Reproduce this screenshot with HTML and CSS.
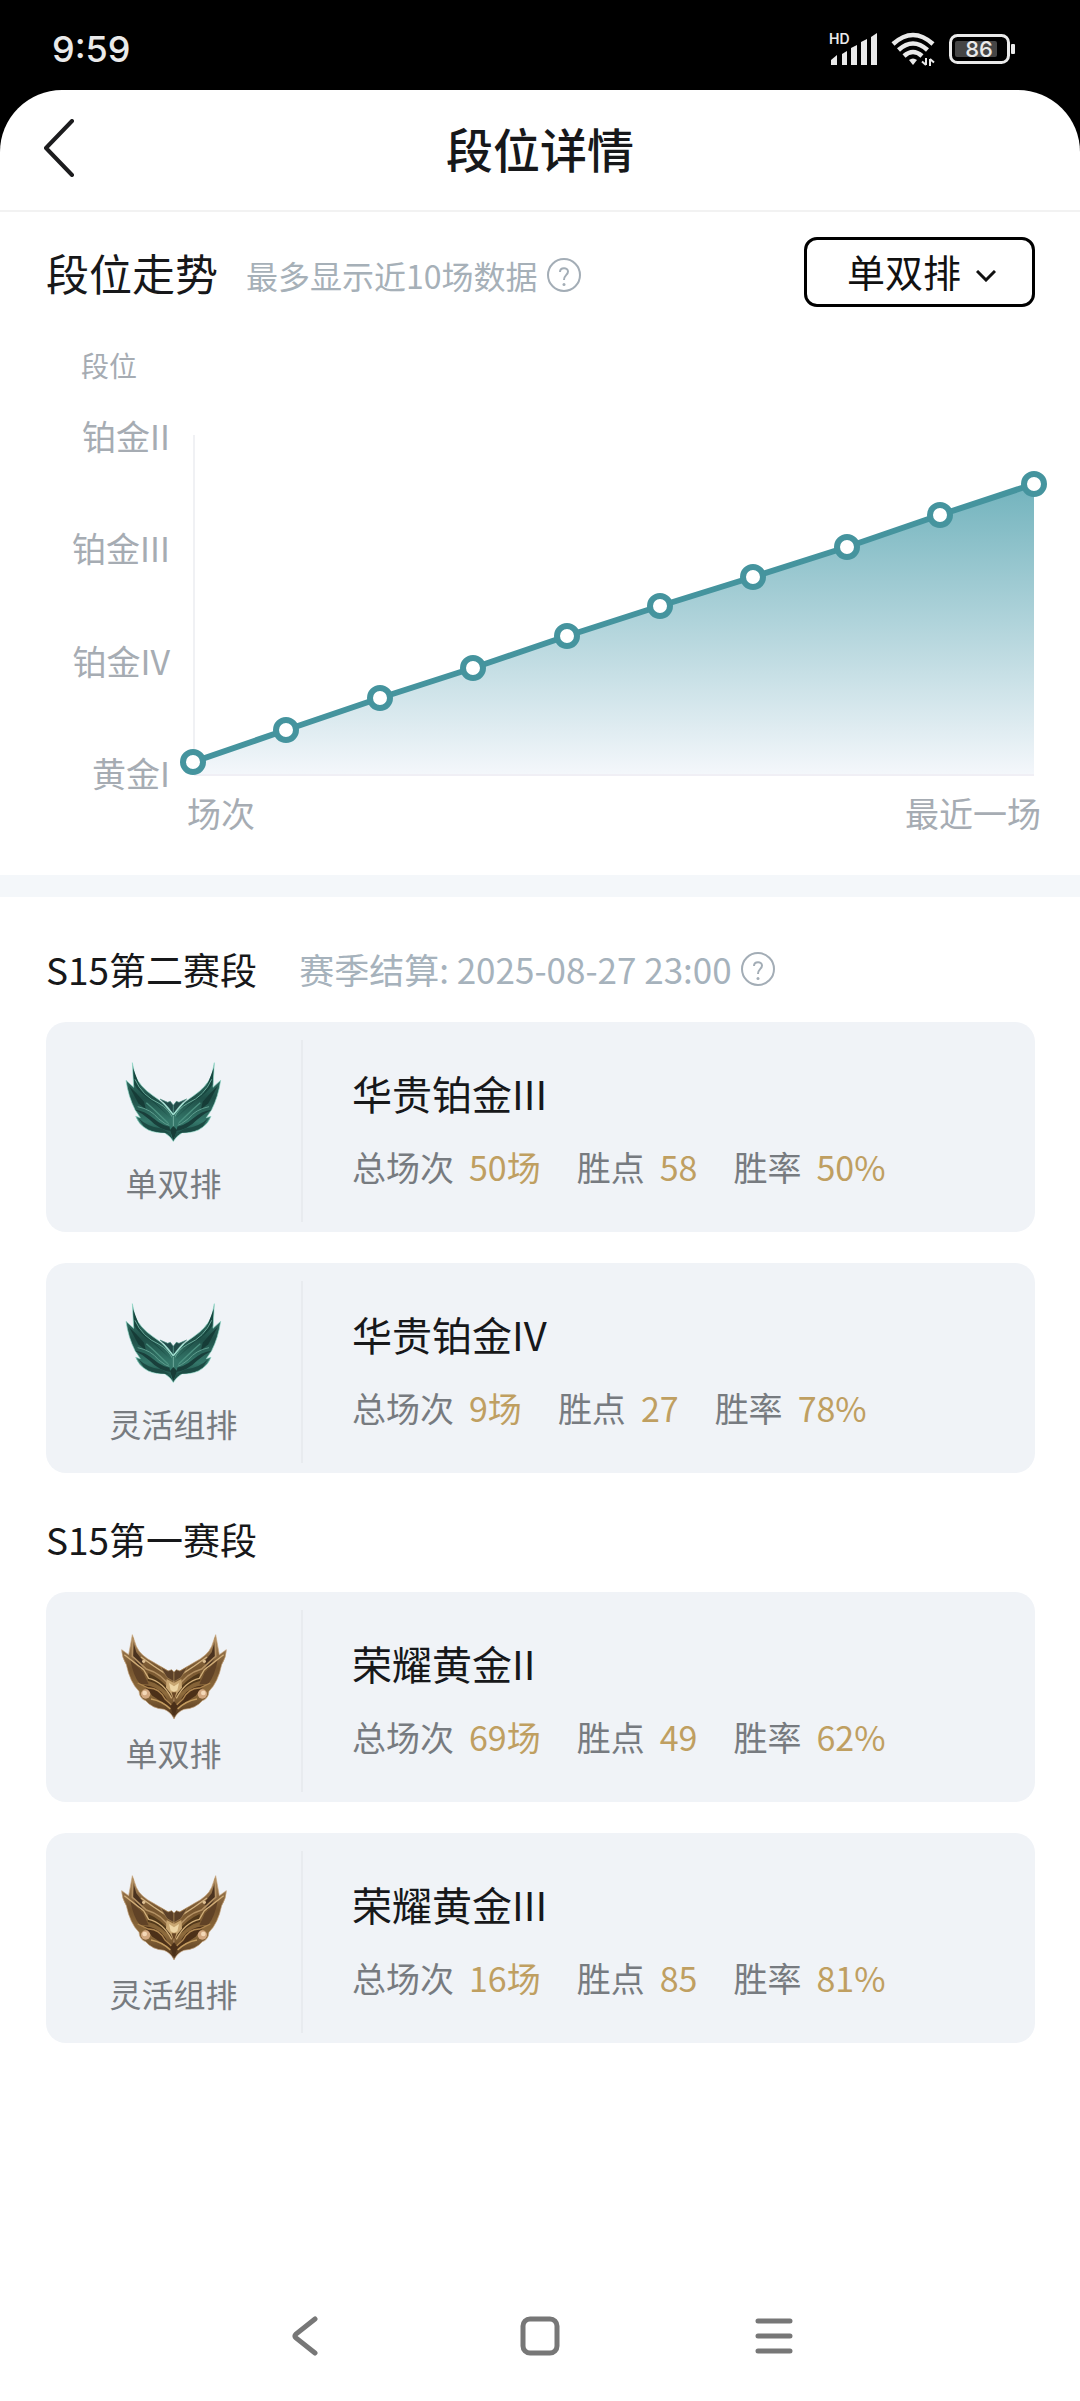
FILE: index.html
```html
<!DOCTYPE html>
<html lang="zh-CN">
<head>
<meta charset="utf-8">
<meta name="viewport" content="width=device-width, initial-scale=1">
<title>段位详情</title>
<link rel="stylesheet" href="styles.css">
</head>
<body>
<svg class="defs" aria-hidden="true">
  <defs>
    <linearGradient id="area" x1="0" y1="0" x2="0" y2="1">
      <stop offset="0" stop-color="#72b3bd"/>
      <stop offset="1" stop-color="#f4f7fb"/>
    </linearGradient>
    <linearGradient id="teal" x1="0" y1="0" x2="0" y2="1">
      <stop offset="0" stop-color="#3f8577"/>
      <stop offset=".45" stop-color="#1f5048"/>
      <stop offset=".75" stop-color="#34776a"/>
      <stop offset="1" stop-color="#163f3a"/>
    </linearGradient>
    <linearGradient id="gold" x1="0" y1="0" x2="0" y2="1">
      <stop offset="0" stop-color="#b08d62"/>
      <stop offset=".4" stop-color="#76552f"/>
      <stop offset=".7" stop-color="#8e6b3c"/>
      <stop offset="1" stop-color="#4a2f19"/>
    </linearGradient>
    <symbol id="platinum" viewBox="0 -15 390 330">
      <g id="platinum-wing">
        <path d="M70 38 L78 76 Q94 112 132 137 Q176 166 193 194 L193 274 Q184 258 166 248 Q128 250 105 232 Q88 220 80 199 L94 203 L78 179 Q58 140 51 91 L74 112Z" fill="url(#teal)" stroke="#8fd6c5" stroke-width="2"/>
        <path d="M72 54 L76 104 Q94 132 126 150 L186 205 Q150 170 96 118Z" fill="#17463f"/>
        <path d="M60 108 Q82 128 105 155 L111 179 L88 160Z" fill="#163c37"/>
        <path d="M78 179 Q108 182 136 207 Q160 228 190 231 L190 244 Q150 239 122 209 Q104 192 78 179Z" fill="#193f3b"/>
        <path d="M78 88 Q100 138 150 160 Q178 176 190 202" fill="none" stroke="#69a999" stroke-width="3"/>
        <path d="M86 170 Q126 178 148 206 Q168 224 190 230" fill="none" stroke="#5f9e8f" stroke-width="3"/>
        <path d="M88 204 Q116 232 160 236 L180 249 Q130 250 104 228Z" fill="#1d4c45"/>
        <path d="M112 158 L134 178 L184 226" fill="none" stroke="#4c9180" stroke-width="4"/>
        <path d="M153 147 L176 157 L184 154 L193 166 L193 194 Q180 170 153 147Z" fill="#214b49" stroke="#4f8f83" stroke-width="2"/>
      </g>
      <use href="#platinum-wing" transform="translate(386 0) scale(-1 1)"/>
      <path d="M162 158 L193 194 L224 158" fill="none" stroke="#a5e3d4" stroke-width="4"/>
      <path d="M193 194 L210 211 L197 264 L193 274 L187 260 L178 211Z" fill="#35776a"/>
      <path d="M193 198 L193 270" stroke="#8cc7b7" stroke-width="2"/>
      <path d="M193 228 L204 240 L193 272 L183 240Z" fill="#173c37"/>
    </symbol>
    <symbol id="golden" viewBox="0 0 390 330">
      <g id="golden-wing">
        <path d="M70 59 L82 94 Q94 122 134 142 L178 168 L195 199 L195 311 Q184 290 165 283 Q129 280 110 257 Q92 252 90 229 Q63 202 52 149 Q38 126 38 104 L59 119Z" fill="url(#gold)" stroke="#c7a47d" stroke-width="2"/>
        <path d="M71 74 L82 112 L104 140 L94 162 L70 126Z" fill="#4a321f"/>
        <path d="M64 135 L102 172 L119 208 L92 207 Q72 180 64 135Z" fill="#604226"/>
        <path d="M118 174 Q158 192 180 224 L190 250 Q154 205 116 197Z" fill="#503719"/>
        <path d="M104 210 Q150 214 168 244 L190 280 Q154 258 130 242Z" fill="#4c3018"/>
        <path d="M72 68 L70 124 L112 162 Q160 176 184 218" fill="none" stroke="#b49163" stroke-width="5"/>
        <path d="M46 119 L104 164 L119 190 Q162 200 188 250" fill="none" stroke="#d0ad78" stroke-width="4"/>
        <path d="M96 126 L134 153 L178 182" fill="none" stroke="#d2b281" stroke-width="4"/>
        <path d="M86 204 L118 219 Q150 218 168 252 L190 272" fill="none" stroke="#af8751" stroke-width="4"/>
        <path d="M126 252 Q160 258 184 282" fill="none" stroke="#c59d60" stroke-width="4"/>
        <circle cx="110" cy="237" r="14" fill="#d3a982"/>
        <circle cx="107" cy="234" r="7" fill="#f4d8b7"/>
        <circle cx="104" cy="139" r="5" fill="#dfc093"/>
        <path d="M154 155 L177 168 L188 164 L195 172 L195 200 L174 188Z" fill="#5b4028" stroke="#a88556" stroke-width="2"/>
      </g>
      <use href="#golden-wing" transform="translate(390 0) scale(-1 1)"/>
      <path d="M173 192 L195 204 L217 192 L219 218 L205 235 L195 254 L185 235 L171 218Z" fill="#c8a671"/>
      <path d="M180 204 L195 214 L210 204 L205 226 L195 230 L185 226Z" fill="#eed6a5"/>
      <path d="M188 232 L202 232 L195 256Z" fill="#6a4725"/>
      <path d="M195 258 L206 274 L195 308 L184 274Z" fill="#4a2f18"/>
    </symbol>
    <symbol id="help" viewBox="0 0 34 34">
      <circle cx="17" cy="17" r="16" fill="none" stroke="currentColor" stroke-width="2"/>
      <path d="M13 14 C13 9 21 9 21 13.500 C21 17 17 17 17 22" fill="none" stroke="currentColor" stroke-width="2"/>
      <circle cx="17" cy="26.500" r="1.500" fill="currentColor"/>
    </symbol>
  </defs>
</svg>

<div class="screen">
  <div class="status">
    <span class="clock">9:59</span>
    <div class="indicators">
      <svg width="50" height="42" viewBox="-2 -5 50 42" role="img" aria-label="信号">
        <text class="hd" x="0" y="11">HD</text>
        <g fill="#eaeaea">
          <path d="M2 27 L8 22 V32 H2Z"/><path d="M13 21 L18 18 V32 H13Z"/><path d="M22 15 L28 12 V32 H22Z"/><path d="M32 9 L38 6 V32 H32Z"/><path d="M42 4 L48 0 V32 H42Z"/>
        </g>
      </svg>
      <svg width="44" height="34" viewBox="0 0 44 34" role="img" aria-label="无线网络">
        <g fill="none" stroke="#eaeaea" stroke-width="4.500">
          <path d="M2 12 Q22 -6 42 12"/><path d="M7.500 18 Q22 5 36.500 18"/><path d="M13 24 Q22 16 31 24"/>
        </g>
        <path d="M18 28 Q22 25 26 28 L22 33Z" fill="#eaeaea"/>
        <path d="M35 26 V33 M35 33 L31 29.500 M39 34 V27 M39 27 L43 30.500" fill="none" stroke="#eaeaea" stroke-width="2"/>
      </svg>
      <svg width="66" height="30" viewBox="0 0 66 30" role="img" aria-label="电量 86">
        <rect x="1.500" y="1.500" width="58" height="27" rx="7" fill="none" stroke="#eaeaea" stroke-width="3"/>
        <rect x="6" y="7" width="42" height="16" rx="2" fill="#454545"/>
        <rect x="62" y="10" width="4" height="10" rx="1" fill="#eaeaea"/>
        <text class="level" x="30" y="23" text-anchor="middle">86</text>
      </svg>
    </div>
  </div>

  <main class="sheet">
    <header class="header">
      <button class="back" type="button" aria-label="返回">
        <svg width="32" height="58" viewBox="0 0 32 58"><path d="M29 2 L3 29 L29 56" fill="none" stroke="#1c1c1e" stroke-width="4" stroke-linecap="round" stroke-linejoin="round"/></svg>
      </button>
      <h1 class="title">段位详情</h1>
    </header>

    <section class="trend">
      <div class="trend-head">
        <h2 class="trend-title">段位走势</h2>
        <div class="note">
          <span class="hint">最多显示近10场数据</span>
          <button class="help" type="button" aria-label="说明"><svg width="34" height="34"><use href="#help"/></svg></button>
        </div>
        <div class="picker">
          <select aria-label="队列"><option>单双排</option><option>灵活组排</option></select>
          <svg class="chevron" width="20" height="12" viewBox="0 0 20 12"><path d="M1 1 L10 10 L19 1" fill="none" stroke="#111" stroke-width="3"/></svg>
        </div>
      </div>
      <div class="axis-name">段位</div>
      <div class="chart">
        <div class="ranks"><span>铂金II</span><span>铂金III</span><span>铂金IV</span><span>黄金I</span></div>
        <svg class="plot" viewBox="0 0 870 374" role="img" aria-label="段位走势图">
          <path d="M14 17 V357" stroke="#f0f1f4" stroke-width="2"/>
          <path d="M13 344 L106 312 L200 280 L293 250 L387 218 L480 188 L573 159 L667 129 L760 97 L854 66 V357 H13Z" fill="url(#area)"/>
          <path d="M14 357 H854" stroke="#f0eff5" stroke-width="2"/>
          <path d="M13 344 L106 312 L200 280 L293 250 L387 218 L480 188 L573 159 L667 129 L760 97 L854 66" fill="none" stroke="#45949e" stroke-width="6"/>
          <g fill="#fff" stroke="#45949e" stroke-width="6">
            <circle cx="13" cy="344" r="10"/><circle cx="106" cy="312" r="10"/><circle cx="200" cy="280" r="10"/><circle cx="293" cy="250" r="10"/><circle cx="387" cy="218" r="10"/><circle cx="480" cy="188" r="10"/><circle cx="573" cy="159" r="10"/><circle cx="667" cy="129" r="10"/><circle cx="760" cy="97" r="10"/><circle cx="854" cy="66" r="10"/>
          </g>
        </svg>
      </div>
      <div class="games"><span>场次</span><span>最近一场</span></div>
    </section>

    <section class="season">
      <div class="season-head">
        <h2 class="season-title">S15第二赛段</h2>
        <span class="settle">赛季结算: 2025-08-27 23:00</span>
        <button class="help" type="button" aria-label="结算说明"><svg width="34" height="34"><use href="#help"/></svg></button>
      </div>
      <article class="card">
        <div class="queue"><svg width="130" height="110"><use href="#platinum"/></svg><span>单双排</span></div>
        <div class="detail">
          <h3 class="rank">华贵铂金III</h3>
          <dl class="stats"><div><dt>总场次</dt><dd>50场</dd></div><div><dt>胜点</dt><dd>58</dd></div><div><dt>胜率</dt><dd>50%</dd></div></dl>
        </div>
      </article>
      <article class="card">
        <div class="queue"><svg width="130" height="110"><use href="#platinum"/></svg><span>灵活组排</span></div>
        <div class="detail">
          <h3 class="rank">华贵铂金IV</h3>
          <dl class="stats"><div><dt>总场次</dt><dd>9场</dd></div><div><dt>胜点</dt><dd>27</dd></div><div><dt>胜率</dt><dd>78%</dd></div></dl>
        </div>
      </article>
    </section>

    <section class="season">
      <div class="season-head"><h2 class="season-title">S15第一赛段</h2></div>
      <article class="card">
        <div class="queue"><svg width="130" height="110"><use href="#golden"/></svg><span>单双排</span></div>
        <div class="detail">
          <h3 class="rank">荣耀黄金II</h3>
          <dl class="stats"><div><dt>总场次</dt><dd>69场</dd></div><div><dt>胜点</dt><dd>49</dd></div><div><dt>胜率</dt><dd>62%</dd></div></dl>
        </div>
      </article>
      <article class="card">
        <div class="queue"><svg width="130" height="110"><use href="#golden"/></svg><span>灵活组排</span></div>
        <div class="detail">
          <h3 class="rank">荣耀黄金III</h3>
          <dl class="stats"><div><dt>总场次</dt><dd>16场</dd></div><div><dt>胜点</dt><dd>85</dd></div><div><dt>胜率</dt><dd>81%</dd></div></dl>
        </div>
      </article>
    </section>

    <nav class="nav" aria-label="系统导航">
      <button type="button" aria-label="返回"><svg width="40" height="40" viewBox="0 0 40 40"><path d="M29 3 L10 18 Q8 20 10 22 L29 37" fill="none" stroke="#777" stroke-width="5" stroke-linecap="round"/></svg></button>
      <button type="button" aria-label="主屏幕"><svg width="40" height="40" viewBox="0 0 40 40"><rect x="3" y="3" width="34" height="34" rx="7" fill="none" stroke="#777" stroke-width="5"/></svg></button>
      <button type="button" aria-label="最近任务"><svg width="40" height="40" viewBox="0 0 40 40"><path d="M4 5 H36 M4 20 H36 M4 35 H36" stroke="#777" stroke-width="5" stroke-linecap="round"/></svg></button>
    </nav>
  </main>
</div>
</body>
</html>
```
FILE: styles.css
```css
* { box-sizing: border-box; }
body {
  margin: 0;
  background: #000;
  color: #17181a;
  font-family: "Noto Sans CJK SC", "Noto Sans", sans-serif;
  font-weight: 400;
}
h1, h2, h3, dl, dd { margin: 0; font-weight: 400; }
svg { display: block; }
button {
  padding: 0;
  border: 0;
  background: none;
  color: inherit;
  font: inherit;
}
.defs { position: absolute; width: 0; height: 0; }
.screen { display: flex; flex-direction: column; min-height: 100vh; }

.status {
  display: flex;
  justify-content: space-between;
  align-items: center;
  height: 90px;
  padding: 7px 65px 0 52px;
  color: #eaeaea;
}
.clock { font: 500 36px/40px Inter, "Noto Sans", sans-serif; }
.indicators { display: flex; align-items: center; gap: 14px; }
.hd { fill: #eaeaea; font: 600 14px Inter, sans-serif; }
.level { fill: #eaeaea; font: 500 22px Inter, sans-serif; }

.sheet {
  display: flex;
  flex-direction: column;
  flex: 1;
  border-radius: 62px 62px 0 0;
  background: #fff;
}
.header {
  display: grid;
  grid-template-columns: 120px 1fr 120px;
  align-items: center;
  height: 122px;
  padding-bottom: 4px;
  border-bottom: 2px solid #f2f2f2;
}
.back { justify-self: start; padding-left: 43px; }
.title { font-size: 47px; line-height: 60px; font-weight: 500; text-align: center; }

.trend { padding-top: 25px; padding-bottom: 42px; border-bottom: 22px solid #f4f7fa; }
.trend-head { display: flex; align-items: center; padding: 0 45px 0 46px; }
.trend-title { font-size: 43px; line-height: 60px; }
.note { display: flex; align-items: center; padding-top: 5px; }
.hint { margin-left: 28px; font-size: 32px; line-height: 60px; color: #a6b0b8; }
.help { color: #a3adb6; margin-left: 9px; }
.picker { display: grid; width: 231px; margin-left: auto; align-items: center; }
.picker select {
  grid-area: 1 / 1;
  height: 70px;
  padding: 0 0 4px 40px;
  border: 3px solid #000;
  border-radius: 13px;
  background: #fff;
  color: #111;
  font: 400 38px "Noto Sans CJK SC", sans-serif;
  appearance: none;
}
.chevron { grid-area: 1 / 1; justify-self: end; margin-right: 39px; margin-top: 8px; pointer-events: none; }
.axis-name { padding: 38px 0 33px 81px; font-size: 28px; line-height: 40px; color: #a6acb3; }
.chart { display: grid; grid-template-columns: 170px 1fr; gap: 10px; padding-right: 30px; }
.ranks {
  display: flex;
  flex-direction: column;
  justify-content: space-between;
  align-items: flex-end;
  padding: 1px 0 2px;
  font-size: 34px;
  line-height: 34px;
  color: #a6acb3;
}
.plot { width: 100%; }
.games {
  display: flex;
  justify-content: space-between;
  padding: 1px 39px 0 187px;
  font-size: 34px;
  line-height: 40px;
  color: #a6acb3;
}

.season { display: flex; flex-direction: column; gap: 31px; padding: 46px 45px 0 46px; }
.season + .season { padding-top: 40px; }
.season-head { display: flex; align-items: center; margin-bottom: -4px; }
.season-title { font-size: 37px; line-height: 52px; }
.settle { margin-left: 42px; font-size: 35px; line-height: 52px; color: #a6b2bc; }
.card {
  display: grid;
  grid-template-columns: 255px 1fr;
  border-radius: 20px;
  background: #f0f3f7;
}
.queue {
  display: flex;
  flex-direction: column;
  align-items: center;
  gap: 7px;
  padding: 23px 0 30px;
  font-size: 32px;
  line-height: 40px;
  color: #777b80;
}
.detail {
  display: flex;
  flex-direction: column;
  justify-content: center;
  gap: 24px;
  margin: 18px 0 10px;
  padding: 0 0 8px 49px;
  border-left: 2px solid #e8ebef;
}
.rank { font-size: 40px; line-height: 56px; }
.stats { display: flex; gap: 36px; font-size: 34px; line-height: 44px; color: #777b80; }
.stats div { display: flex; gap: 15px; }
.stats dd { color: #bf9f61; }

.nav {
  display: flex;
  justify-content: center;
  align-items: center;
  gap: 194px;
  height: 131px;
  margin-top: auto;
}
```
